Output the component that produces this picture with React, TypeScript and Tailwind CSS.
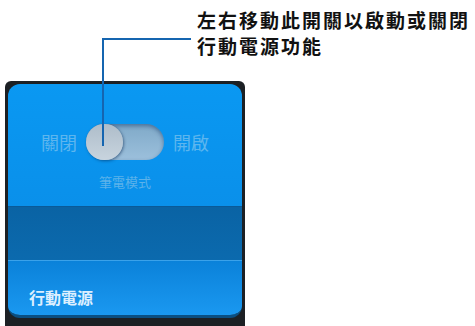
import React from 'react'

const cjk = { fontFamily: '"Noto Sans CJK TC", "Noto Sans", sans-serif' }

const Toggle = () => {
  return (
    <div className="relative w-[78px] h-[36px] rounded-full bg-gradient-to-b from-[#7fa9c8] to-[#9cc0dc] shadow-[inset_0_2px_4px_rgba(0,40,90,0.45)]">
      <div className="absolute left-0 top-0 w-[37px] h-[36px] rounded-full bg-gradient-to-b from-[#aebdca] to-[#c8d4de] shadow-[1px_1px_3px_rgba(0,30,70,0.5)]" />
    </div>
  )
}

export default function App() {
  return (
    <div className="relative w-[475px] h-[326px] bg-white overflow-hidden" style={cjk}>
      {/* callout */}
      <div className="absolute left-[197px] top-[7px] text-[19px] leading-[26px] font-bold text-[#111] tracking-[2px]">
        <div>左右移動此開關以啟動或關閉</div>
        <div>行動電源功能</div>
      </div>
      <div className="absolute left-[102px] top-[38px] w-[89px] h-[2px] bg-[#1565b0] z-10" />
      <div className="absolute left-[102px] top-[38px] w-[2px] h-[108px] bg-[#1565b0] z-10" />

      {/* panel */}
      <div className="ml-[5px] mt-[81px] w-[240px] h-[245px] bg-[#1c2024] pt-[3px] px-[3px] rounded-tl-[6px] rounded-tr-[6px]">
        <div className="w-[234px] h-[234px] rounded-[12px] overflow-hidden flex flex-col border-b-[3px] border-[#0a4f82]">
          <div className="h-[122px] bg-gradient-to-b from-[#0a98f2] to-[#0a90ea] flex flex-col items-center pt-[40px]">
            <div className="flex items-center gap-[9px]">
              <span className="text-[18px] leading-[22px] text-[#5db6ee]">關閉</span>
              <Toggle />
              <span className="text-[18px] leading-[22px] text-[#5db6ee]">開啟</span>
            </div>
            <div className="mt-[14px] text-[13px] leading-[16px] text-[#5cb2ea]">筆電模式</div>
          </div>
          <div className="h-[54px] bg-gradient-to-b from-[#0a63a4] to-[#0b6aae] border-t border-[#0a5a98]" />
          <div className="h-[1px] bg-[#3aa2ea]" />
          <div className="flex-1 bg-gradient-to-b from-[#0a82da] to-[#1a98f0] pl-[21px] pt-[24px]">
            <span className="text-[16px] leading-[20px] font-bold text-[#dcefff]">行動電源</span>
          </div>
        </div>
      </div>
    </div>
  )
}
